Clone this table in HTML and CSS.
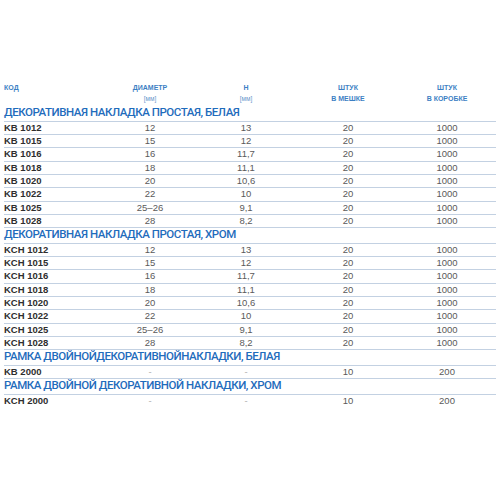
FILE: index.html
```html
<!DOCTYPE html>
<html lang="ru">
<head>
<meta charset="utf-8">
<title>Таблица</title>
<link rel="stylesheet" href="styles.css">
</head>
<body>
<div class="table">
  <div class="head">
    <div class="hc left">КОД</div>
    <div class="hc">ДИАМЕТР<br><span class="unit">[мм]</span></div>
    <div class="hc">Н<br><span class="unit">[мм]</span></div>
    <div class="hc">ШТУК<br>В МЕШКЕ</div>
    <div class="hc">ШТУК<br>В КОРОБКЕ</div>
  </div>

  <div class="title">ДЕКОРАТИВНАЯ НАКЛАДКА ПРОСТАЯ, БЕЛАЯ</div>
  <div class="row"><div class="code">KB 1012</div><div>12</div><div>13</div><div>20</div><div>1000</div></div>
  <div class="row"><div class="code">KB 1015</div><div>15</div><div>12</div><div>20</div><div>1000</div></div>
  <div class="row"><div class="code">KB 1016</div><div>16</div><div>11,7</div><div>20</div><div>1000</div></div>
  <div class="row"><div class="code">KB 1018</div><div>18</div><div>11,1</div><div>20</div><div>1000</div></div>
  <div class="row"><div class="code">KB 1020</div><div>20</div><div>10,6</div><div>20</div><div>1000</div></div>
  <div class="row"><div class="code">KB 1022</div><div>22</div><div>10</div><div>20</div><div>1000</div></div>
  <div class="row"><div class="code">KB 1025</div><div>25–26</div><div>9,1</div><div>20</div><div>1000</div></div>
  <div class="row"><div class="code">KB 1028</div><div>28</div><div>8,2</div><div>20</div><div>1000</div></div>

  <div class="title">ДЕКОРАТИВНАЯ НАКЛАДКА ПРОСТАЯ, ХРОМ</div>
  <div class="row"><div class="code">KCH 1012</div><div>12</div><div>13</div><div>20</div><div>1000</div></div>
  <div class="row"><div class="code">KCH 1015</div><div>15</div><div>12</div><div>20</div><div>1000</div></div>
  <div class="row"><div class="code">KCH 1016</div><div>16</div><div>11,7</div><div>20</div><div>1000</div></div>
  <div class="row"><div class="code">KCH 1018</div><div>18</div><div>11,1</div><div>20</div><div>1000</div></div>
  <div class="row"><div class="code">KCH 1020</div><div>20</div><div>10,6</div><div>20</div><div>1000</div></div>
  <div class="row"><div class="code">KCH 1022</div><div>22</div><div>10</div><div>20</div><div>1000</div></div>
  <div class="row"><div class="code">KCH 1025</div><div>25–26</div><div>9,1</div><div>20</div><div>1000</div></div>
  <div class="row"><div class="code">KCH 1028</div><div>28</div><div>8,2</div><div>20</div><div>1000</div></div>

  <div class="title">РАМКА ДВОЙНОЙДЕКОРАТИВНОЙНАКЛАДКИ, БЕЛАЯ</div>
  <div class="row"><div class="code">KB 2000</div><div class="dash">-</div><div class="dash">-</div><div>10</div><div>200</div></div>

  <div class="title">РАМКА ДВОЙНОЙ ДЕКОРАТИВНОЙ НАКЛАДКИ, ХРОМ</div>
  <div class="row last"><div class="code">KCH 2000</div><div class="dash">-</div><div class="dash">-</div><div>10</div><div>200</div></div>
</div>
</body>
</html>
```

FILE: styles.css
```css
html, body {
  margin: 0;
  padding: 0;
  background: #ffffff;
}

body {
  font-family: "Liberation Sans", Arial, sans-serif;
}

.table {
  width: 492px;
  padding: 82px 4px 0 4px;
}

.head,
.row {
  display: grid;
  grid-template-columns: 96px 100px 92px 112px 86px;
}

.head {
  height: 24px;
  color: #3d7fc4;
  font-size: 7px;
  font-weight: bold;
  line-height: 11px;
}

.hc {
  text-align: center;
}

.hc.left {
  text-align: left;
}

.unit {
  font-weight: normal;
  font-size: 6.5px;
  color: #6a98cc;
}

.title {
  box-sizing: border-box;
  height: 15.6px;
  line-height: 13.6px;
  border-bottom: 1px solid #c3d1e2;
  color: #1f6cbc;
  font-family: Roboto, "Liberation Sans", sans-serif;
  font-weight: 500;
  font-size: 11.5px;
  letter-spacing: -0.45px;
  white-space: nowrap;
}

.row {
  box-sizing: border-box;
  height: 13.33px;
  line-height: 12.33px;
  border-bottom: 1px solid #c3d1e2;
  font-size: 9.5px;
  color: #5a5a5a;
  text-align: center;
}

.row.last {
  border-bottom: none;
}

.row .code {
  text-align: left;
  font-weight: bold;
  color: #2e2e2e;
  font-size: 9.5px;
}

.row .dash {
  color: #b0b0b0;
}
```
